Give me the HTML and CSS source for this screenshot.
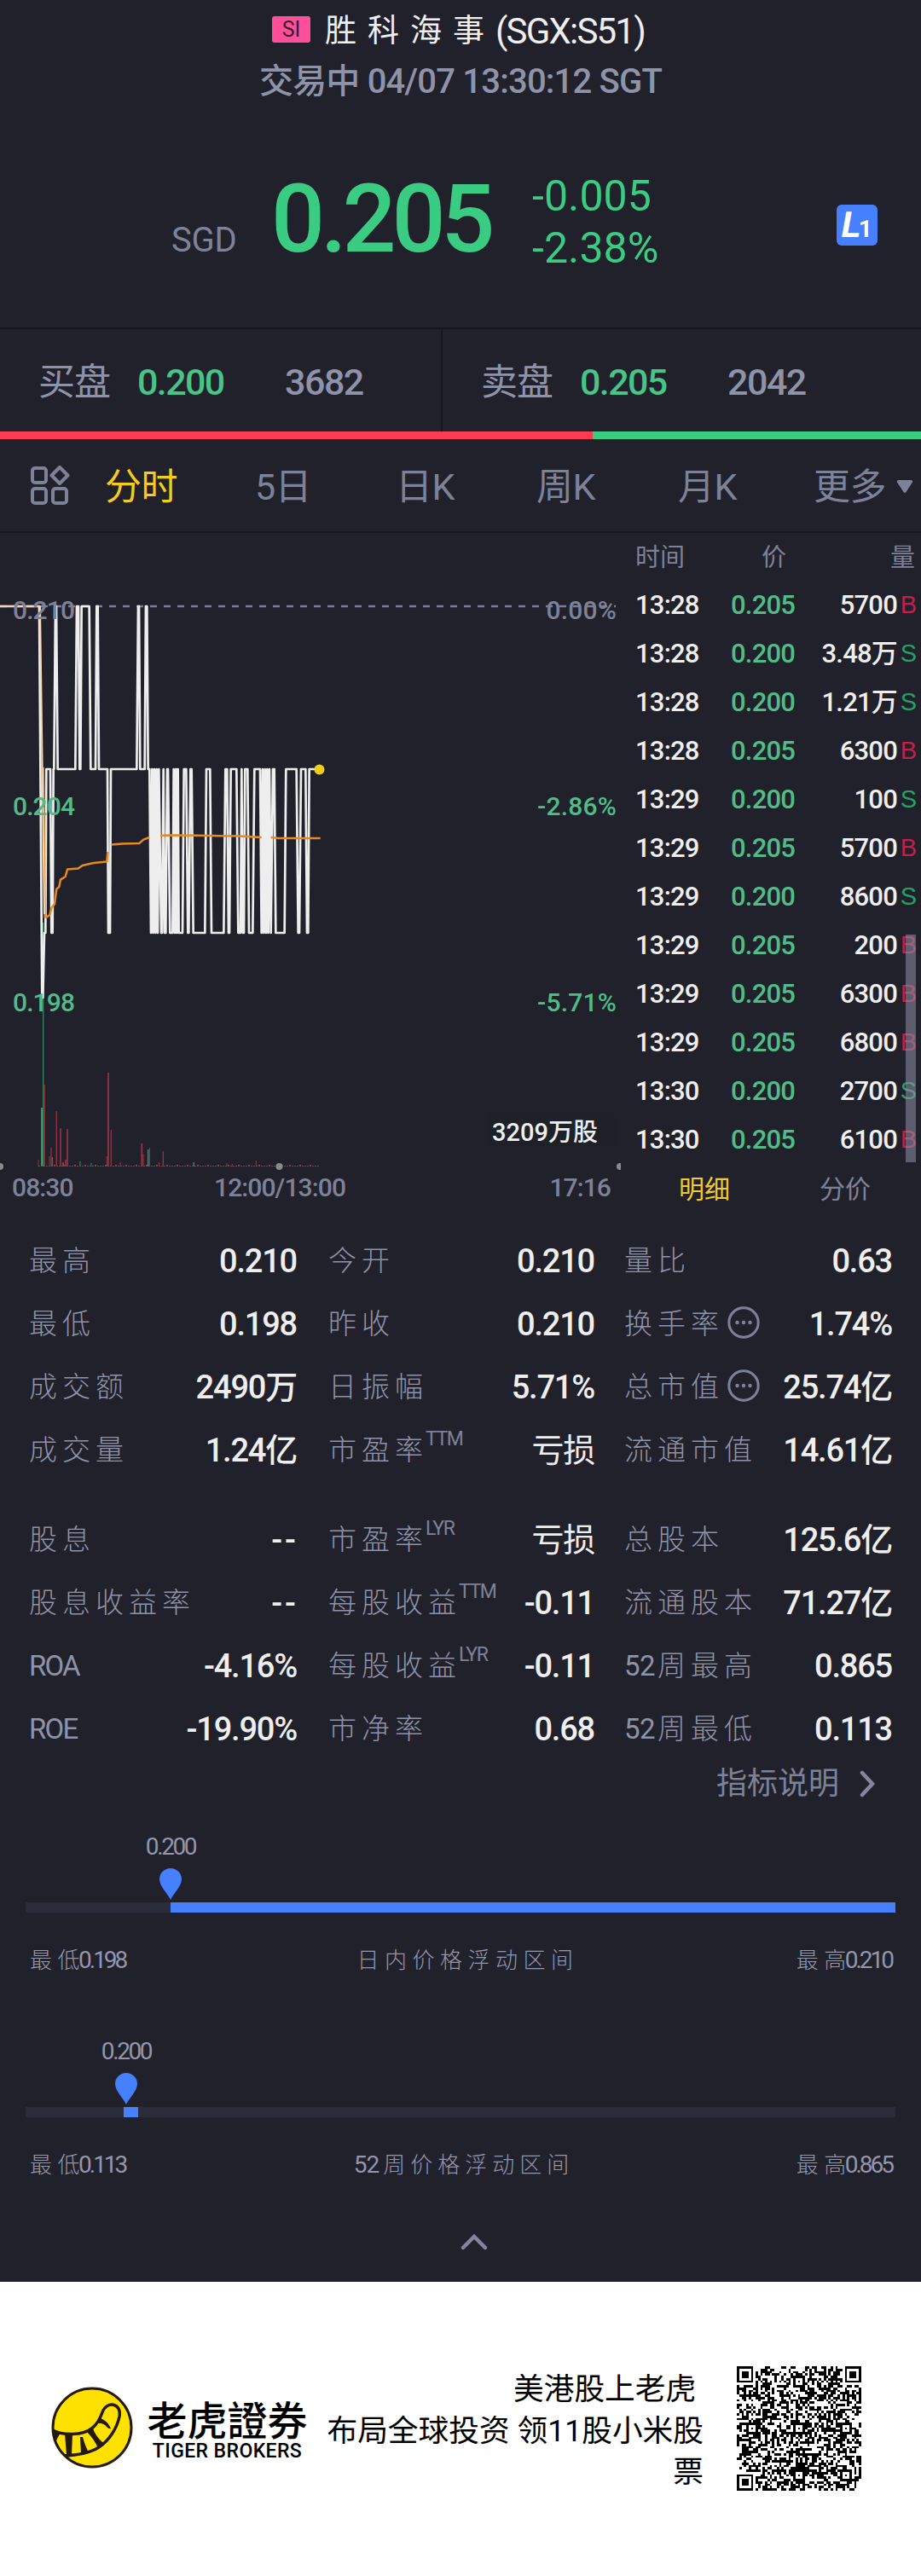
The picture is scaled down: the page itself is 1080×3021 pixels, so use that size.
FILE: index.html
```html
<!DOCTYPE html>
<html lang="zh-CN">
<head>
<meta charset="utf-8">
<title>胜科海事 (SGX:S51)</title>
<link rel="stylesheet" href="styles.css">
</head>
<body>
<main class="app">
  <header class="head">
    <div class="title"><span class="market">SI</span><span class="name">胜科海事</span><span class="code">(SGX:S51)</span></div>
    <div class="status">交易中 04/07 13:30:12 SGT</div>
  </header>

  <section class="quote">
    <span class="currency">SGD</span>
    <span class="price">0.205</span>
    <div class="change"><span>-0.005</span><span>-2.38%</span></div>
    <span class="level"><b>L</b><i>1</i></span>
  </section>

  <section class="book">
    <div class="side"><span class="side-name">买盘</span><span class="side-price">0.200</span><span class="side-qty">3682</span></div>
    <div class="side"><span class="side-name">卖盘</span><span class="side-price">0.205</span><span class="side-qty">2042</span></div>
  </section>
  <div class="ratio"><i class="ratio-buy" style="width:64.35%"></i></div>

  <nav class="tabs">
    <svg class="grid-icon" viewBox="0 0 48 48" width="48" height="48" fill="none" stroke="#7e8299" stroke-width="4">
      <rect x="3" y="3" width="16" height="17" rx="3"/><rect x="3" y="27" width="16" height="17" rx="3"/><rect x="27" y="27" width="16" height="17" rx="3"/><path d="M35 2 L44.500 11.500 L35 21 L25.500 11.500 Z" stroke-linejoin="round"/>
    </svg>
    <span class="tab tab-on">分时</span><span class="tab">5日</span><span class="tab">日K</span><span class="tab">周K</span><span class="tab">月K</span><span class="tab tab-more">更多</span>
    <svg class="caret" viewBox="0 0 20 17" width="20" height="17"><path d="M2 1H18Q20 2 19 3.500L11.500 15Q10 17 8.500 15L1 3.500Q0 2 2 1Z" fill="#7e8299"/></svg>
  </nav>

  <section class="market-view">
    <svg class="chart" viewBox="0 625 728 800" width="728" height="800">
      <path d="M0 711H722" stroke="#7a7d95" stroke-width="2.500" stroke-dasharray="8 8"/>
      <g id="volume"></g>
      <g fill="none" transform="scale(.33333 1)" stroke-linejoin="round">
        <path vector-effect="non-scaling-stroke" stroke="#eeeeee" stroke-width="2.700" d="M0 711H138L148 1170H151L156 1094H160L163 902H177L181 1094H185L188 902H190L195 711H198L203 902H265L270 711H276L280 902H283L287 711H314L319 902H336L340 711H344L348 902H378L381 1094H387L390 902H481L486 711H489L493 902H509L513 711H517L521 902H526L531 1094L535 902L539 1094L543 902L547 1094L551 902L555 1094L559 902L567 1094H570L575 902L579 1094H583L588 902H591L598 1094H607L611 902L615 1094L619 902L622 1094L626 902L629 1094H642L647 902H655L661 1094H664L670 902H674L680 1094H721L726 902H739L744 1094H787L793 902H799L804 1094H807L812 902H832L838 1094H846L850 902L854 1094H858L862 902H871L876 1094H889L895 902H915L920 1094L924 902L928 1094L932 902L936 1094L940 902L944 1094L948 902L953 1094L960 902H965L970 1094H1001L1006 902H1043L1049 1094H1053L1059 902H1075L1080 1094H1084L1088 902H1123"/>
        <path vector-effect="non-scaling-stroke" stroke="#e58a24" stroke-width="2.500" d="M152 900L158 1075.600H164L175 1073L181 1065L192 1060L199 1042.600L208 1040L213 1031.600L230 1028L237 1019.600L275 1018.600L290 1015L330 1012L376 1010.600L379 999M392 990.600L430 989.600L490 989L505 984.600L526 982M564 980L600 979.600L740 980L840 980.600L920 982M953 982L980 983H1127"/>
        <path vector-effect="non-scaling-stroke" stroke="#f8d4ac" stroke-width="2" d="M0 711H141L156 1072"/>
      </g>
      <circle cx="374.500" cy="902.500" r="6" fill="#f5cf0e"/>
      <g fill="#8a8a8a"><circle cx="0" cy="1368" r="4"/><circle cx="327.500" cy="1368" r="4"/><circle cx="727" cy="1368" r="4"/></g>
      <g class="axis">
        <text x="15" y="726">0.210</text><text class="pct" x="723" y="726" text-anchor="end">0.00%</text>
        <g class="down"><text x="15" y="956">0.204</text><text class="pct" x="723" y="956" text-anchor="end">-2.86%</text>
        <text x="15" y="1185.500">0.198</text><text class="pct" x="723" y="1185.500" text-anchor="end">-5.71%</text></g>
        <text x="14" y="1403">08:30</text><text x="251" y="1403">12:00/13:00</text><text x="716" y="1403" text-anchor="end">17:16</text>
      </g>
      <rect x="571" y="1307" width="151" height="37" fill="#1f2128"/>
      <text class="vol-label" x="577" y="1338">3209万股</text>
    </svg>

    <aside class="ticks">
      <div class="tick tick-head"><span>时间</span><span>价</span><span>量</span></div>
      <div class="tick"><span>13:28</span><em>0.205</em><b>5700</b><i class="b">B</i></div>
      <div class="tick"><span>13:28</span><em>0.200</em><b>3.48万</b><i class="s">S</i></div>
      <div class="tick"><span>13:28</span><em>0.200</em><b>1.21万</b><i class="s">S</i></div>
      <div class="tick"><span>13:28</span><em>0.205</em><b>6300</b><i class="b">B</i></div>
      <div class="tick"><span>13:29</span><em>0.200</em><b>100</b><i class="s">S</i></div>
      <div class="tick"><span>13:29</span><em>0.205</em><b>5700</b><i class="b">B</i></div>
      <div class="tick"><span>13:29</span><em>0.200</em><b>8600</b><i class="s">S</i></div>
      <div class="tick"><span>13:29</span><em>0.205</em><b>200</b><i class="b">B</i></div>
      <div class="tick"><span>13:29</span><em>0.205</em><b>6300</b><i class="b">B</i></div>
      <div class="tick"><span>13:29</span><em>0.205</em><b>6800</b><i class="b">B</i></div>
      <div class="tick"><span>13:30</span><em>0.200</em><b>2700</b><i class="s">S</i></div>
      <div class="tick"><span>13:30</span><em>0.205</em><b>6100</b><i class="b">B</i></div>
      <div class="tick-tabs"><span class="on">明细</span><span>分价</span></div>
      <div class="scrollbar"></div>
    </aside>
  </section>

  <section class="stats">
    <div class="cell"><span>最高</span><b>0.210</b></div><div class="cell"><span>今开</span><b>0.210</b></div><div class="cell"><span>量比</span><b>0.63</b></div>
    <div class="cell"><span>最低</span><b>0.198</b></div><div class="cell"><span>昨收</span><b>0.210</b></div><div class="cell"><span>换手率</span><svg class="more" viewBox="0 0 38 38"><circle cx="19" cy="19" r="17.200"/><path d="M11.500 19h.01M19 19h.01M26.500 19h.01"/></svg><b>1.74%</b></div>
    <div class="cell"><span>成交额</span><b>2490万</b></div><div class="cell"><span>日振幅</span><b>5.71%</b></div><div class="cell"><span>总市值</span><svg class="more" viewBox="0 0 38 38"><circle cx="19" cy="19" r="17.200"/><path d="M11.500 19h.01M19 19h.01M26.500 19h.01"/></svg><b>25.74亿</b></div>
    <div class="cell"><span>成交量</span><b>1.24亿</b></div><div class="cell"><span>市盈率</span><sup>TTM</sup><b class="text">亏损</b></div><div class="cell"><span>流通市值</span><b>14.61亿</b></div>
  </section>
  <section class="stats stats-second">
    <div class="cell"><span>股息</span><b class="dash">--</b></div><div class="cell"><span>市盈率</span><sup>LYR</sup><b class="text">亏损</b></div><div class="cell"><span>总股本</span><b>125.6亿</b></div>
    <div class="cell"><span>股息收益率</span><b class="dash">--</b></div><div class="cell"><span>每股收益</span><sup>TTM</sup><b>-0.11</b></div><div class="cell"><span>流通股本</span><b>71.27亿</b></div>
    <div class="cell"><span class="latin">ROA</span><b>-4.16%</b></div><div class="cell"><span>每股收益</span><sup>LYR</sup><b>-0.11</b></div><div class="cell"><span><span class="latin">52</span>周最高</span><b>0.865</b></div>
    <div class="cell"><span class="latin">ROE</span><b>-19.90%</b></div><div class="cell"><span>市净率</span><b>0.68</b></div><div class="cell"><span><span class="latin">52</span>周最低</span><b>0.113</b></div>
  </section>
  <div class="explain">指标说明<svg viewBox="0 0 20 32" width="20" height="32"><path d="M4 3L16 16L4 29"/></svg></div>

  <section class="range">
    <div class="marker" style="margin-left:170px"><span>0.200</span><svg viewBox="0 0 26 37" width="26" height="37"><path d="M13 37C10 30 0 21 0 13A13 13 0 0 1 26 13C26 21 16 30 13 37Z"/></svg></div>
    <div class="track"><i style="margin-left:170px;width:850px"></i></div>
    <div class="ends"><span>最低<em>0.198</em></span><span class="mid">日内价格浮动区间</span><span>最高<em>0.210</em></span></div>
  </section>
  <section class="range">
    <div class="marker" style="margin-left:118px"><span>0.200</span><svg viewBox="0 0 26 37" width="26" height="37"><path d="M13 37C10 30 0 21 0 13A13 13 0 0 1 26 13C26 21 16 30 13 37Z"/></svg></div>
    <div class="track"><i style="margin-left:115px;width:17px"></i></div>
    <div class="ends"><span>最低<em>0.113</em></span><span class="mid"><em>52</em>周价格浮动区间</span><span>最高<em>0.865</em></span></div>
  </section>
  <div class="collapse"><svg viewBox="0 0 32 20" width="32" height="20"><path d="M3 17L16 4L29 17"/></svg></div>
</main>

<footer class="brand">
  <svg class="logo" viewBox="0 0 96 96" width="96" height="96">
    <defs><clipPath id="disc"><circle cx="48" cy="48" r="46"/></clipPath></defs>
    <circle cx="48" cy="48" r="46" fill="#ffe100"/>
    <g clip-path="url(#disc)">
      <path d="M0 50Q10 56 25 55.500C47 55 55 44 60 30C65 16 83 19 80 35C77 49 68 63 56 71Q42 80 14 81" fill="none" stroke="#231a0c" stroke-width="3.500"/>
      <path d="M16 55H25L24 80H18ZM34 59L37 59Q40 70 44 77L35 79ZM42 53L49 49Q52 58 61 66L55 72Q50 61 42 53ZM53 43L58 37Q66 40 70 49Q68 50 65 47Q61 42 53 43ZM1 49L11 54Q7 60 5 66Z" fill="#231a0c"/>
    </g>
    <circle cx="48" cy="48" r="46" fill="none" stroke="#231a0c" stroke-width="3"/>
  </svg>
  <div class="brand-name"><strong>老虎證券</strong><span>TIGER BROKERS</span></div>
  <p class="slogan">美港股上老虎&nbsp;<br>布局全球投资 领11股小米股<br>票</p>
  <svg class="qr" id="qr" viewBox="0 0 53 53" width="146" height="146" shape-rendering="crispEdges"></svg>
</footer>
<script src="main.js"></script>
</body>
</html>
```
FILE: styles.css
```css
* { box-sizing: border-box; }
body {
  margin: 0;
  width: 1080px;
  background: #fff;
  font-family: Roboto, "Noto Sans CJK SC", sans-serif;
  color: #eee;
}
i, em { font-style: normal; }
.app { height: 2676px; background: #21212b; }

.head { height: 150px; padding-top: 11px; display: flex; flex-direction: column; align-items: center; }
.title { height: 52px; display: flex; align-items: center; line-height: 52px; font-size: 37px; }
.market { width: 45px; height: 31px; margin: -5px 17px 0 0; border-radius: 3px; background: #ff4f9a; color: #3a1a2c; font-size: 25px; line-height: 31px; text-align: center; }
.name { letter-spacing: 13px; }
.code { width: 180px; font-size: 42px; letter-spacing: -1.800px; }
.status { height: 66px; line-height: 66px; font-size: 40px; font-weight: 500; letter-spacing: -.8px; color: #8f93aa; }

.quote { height: 234px; display: flex; color: #3acc82; position: relative; }
.currency { margin: 107px 0 0 201px; width: 117px; font-size: 40px; line-height: 50px; letter-spacing: -.2px; color: #7e8299; }
.price { width: 306px; margin-top: 47px; font-size: 111px; font-weight: 500; line-height: 120px; letter-spacing: -5.2px; }
.change { display: flex; flex-direction: column; margin-top: 50px; font-size: 50px; line-height: 61px; letter-spacing: .1px; }
.level { width: 48px; height: 48px; margin: 90px 51px 0 auto; border-radius: 6px; background: #4680ff; color: #fff; display: flex; justify-content: center; align-items: baseline; line-height: 48px; }
.level b { font-size: 42px; transform: skewX(-10deg); }
.level i { font-size: 28px; font-weight: 700; margin-left: -3px; }

.book { height: 122px; display: flex; border-top: 2px solid #16161f; font-size: 43px; }
.side { width: 517px; padding-left: 45px; display: flex; line-height: 124px; }
.side + .side { border-left: 2px solid #16161f; width: 563px; }
.side-name { width: 116px; letter-spacing: -1px; color: #8f93aa; }
.side-price { width: 173px; font-weight: 500; letter-spacing: -1.600px; color: #47c486; }
.side-qty { letter-spacing: -1.500px; font-weight: 500; color: #8f93aa; }
.ratio { height: 9px; background: #3acc82; }
.ratio-buy { display: block; height: 9px; background: #ff3b50; }

.tabs { height: 110px; border-bottom: 2px solid #16161f; display: grid; grid-template-columns: 123px 176px 165px 165px 166px 159px 97px 29px; align-items: center; color: #7e8299; font-size: 43px; line-height: 108px; letter-spacing: -.6px; }
.tab { padding-top: 2px; }
.grid-icon { margin-left: 35px; }
.tab-on { color: #f3cc1c; }

.market-view { height: 800px; display: flex; position: relative; }
.chart { display: block; font-family: Roboto, "Noto Sans CJK SC", sans-serif; }
.axis { font-size: 30px; letter-spacing: -.9px; fill: #7e8299; font-weight: 500; }
.axis .pct { letter-spacing: .2px; }
.axis .down { fill: #50bd88; }
.vol-label { font-size: 29px; fill: #eee; font-weight: 500; letter-spacing: 0; }
.ticks { width: 352px; position: relative; padding-left: 17px; }
.tick { height: 57px; display: grid; grid-template-columns: 112px 78px 117px 23px; align-items: center; font-size: 31px; font-weight: 500; letter-spacing: -.8px; line-height: 59px; }
.tick em { color: #50bd88; }
.tick b { font-weight: 500; text-align: right; white-space: nowrap; }
.tick i { font-family: "Liberation Sans", sans-serif; font-size: 29px; font-weight: 400; text-align: right; letter-spacing: 0; }
.b { color: #c2204a; }
.s { color: #25a063; }
.tick-head { height: 55px; padding-bottom: 3px; color: #7e8299; font-size: 29px; font-weight: 400; letter-spacing: 0; grid-template-columns: 148px 78px 102px; }
.tick-head span:last-child { text-align: right; }
.tick-tabs { display: flex; gap: 105px; padding-left: 51px; font-size: 30px; line-height: 62px; color: #7e8299; }
.tick-tabs .on { color: #f0cb2e; }
.scrollbar { position: absolute; right: 6px; top: 471px; width: 12px; height: 267px; background: rgba(142, 143, 168, .55); }

.stats { display: grid; grid-template-columns: 314px 312px 312px; column-gap: 37px; padding: 17px 0 0 34px; grid-auto-rows: 74px; }
.stats-second { padding-top: 31px; }
.cell { display: flex; align-items: center; line-height: 74px; font-size: 33px; color: #8f93aa; white-space: nowrap; }
.cell:nth-child(3n) { padding-left: 0; margin-left: -2px; }
.cell span { letter-spacing: 6px; font-weight: 300; }
.cell .latin { letter-spacing: -1.800px; font-size: 33px; font-weight: 400; }
.cell span .latin { letter-spacing: -.5px; margin-right: 3px; }
.cell b { margin-left: auto; font-size: 38px; font-weight: 500; letter-spacing: -1.200px; color: #eee; }
.cell .text { font-weight: 400; }
.cell .dash { letter-spacing: 3px; margin-right: -2px; }
.cell sup { font-size: 23px; line-height: 24px; margin: -26px 0 0 -3px; letter-spacing: -1.400px; color: #7e8299; }
.more { width: 38px; height: 38px; margin-left: 4px; fill: none; stroke: #7e8299; stroke-width: 3; margin-top: -5px; }
.more path { stroke-width: 4.500; stroke-linecap: round; }
.explain { height: 53px; padding: 1px 53px 0 0; display: flex; align-items: center; justify-content: flex-end; gap: 23px; font-size: 36px; line-height: 53px; color: #7e8299; }
.explain svg, .collapse svg { fill: none; stroke: #8285a0; stroke-width: 4.500; stroke-linecap: round; }

.range { height: 240px; padding: 31px 30px 0; color: #9496ab; }
.marker { width: 60px; transform: translateX(-30px); display: flex; flex-direction: column; align-items: center; font-size: 28px; line-height: 34px; letter-spacing: -2.400px; }
.marker svg { margin: 8px 0 3px; fill: #4680ff; }
.track { height: 12px; background: #2b2c39; display: flex; }
.track i { height: 12px; background: #4680ff; }
.ends { display: grid; grid-template-columns: 1fr auto 1fr; padding: 36px 4px 0 5px; font-size: 26px; font-weight: 300; line-height: 40px; letter-spacing: 6.500px; }
.ends span:last-child { text-align: right; }
.ends em { font-size: 28px; font-weight: 400; letter-spacing: -3px; margin-left: -8px; }
.ends .mid { padding-left: 16px; }
.ends .mid em { margin: 0 5px 0 0; letter-spacing: -1px; }
.range + .range .mid { padding-left: 7px; letter-spacing: 6px; }
.collapse { height: 60px; padding: 0 0 0 540px; }
.collapse svg { display: block; transform: translateY(21px); }

.brand { height: 345px; display: flex; align-items: flex-start; color: #000; }
.logo { margin: 123px 0 0 60px; }
.brand-name { width: 187px; margin: 130px 0 0 17px; display: flex; flex-direction: column; align-items: center; }
.brand-name strong { font-family: "Noto Sans CJK TC", sans-serif; font-size: 47px; line-height: 60px; font-weight: 500; white-space: nowrap; }
.brand-name span { font-size: 23px; line-height: 20px; margin-top: -1px; font-weight: 500; letter-spacing: .4px; white-space: nowrap; }
.slogan { width: 465px; margin: 102px 0 0; font-size: 35.700px; line-height: 48.500px; text-align: right; white-space: nowrap; }
.qr { margin: 99px 0 0 39px; }
```
FILE: main.js
```js
const NS = 'http://www.w3.org/2000/svg';

// Volume bars: x, height, width, colour (r = up, g = down)
const bars = [
  [45, 8, 1, 'r'], [49, 69, 2, 'g'], [50.7, 286, 1.2, 'g'], [52.3, 96, 1.3, 'r'],
  [58, 12, 1, 'r'], [60, 22, 1.3, 'r'], [61.3, 11, 1, 'g'], [66.3, 65, 1.3, 'r'],
  [71, 45, 1.6, 'r'], [74, 5, 2, 'r'], [77, 8, 1.5, 'r'], [79, 44, 1.6, 'r'],
  [94, 6, 1, 'g'], [107, 4, 1, 'g'], [125.3, 12, 1, 'r'], [127, 110, 1.7, 'r'],
  [130.3, 43, 1.2, 'r'], [141, 5, 1, 'r'], [166.3, 27, 1.7, 'r'], [168, 15, 1, 'r'],
  [173.700, 20, 1.5, 'g'], [175.500, 22, 1, 'r'], [186.500, 5, 1, 'r'], [191.3, 18, 1.3, 'r'],
  [227.3, 5, 1.4, 'g'], [266, 4, 1, 'r'], [272.3, 3, 1, 'r'], [300.3, 7, 1, 'r']
];
for (let x = 46; x < 375; x += 3) bars.push([x, x % 4 ? 1 : 2, 2, 'r']);
const volume = document.getElementById('volume');
for (const [x, h, w, c] of bars) {
  const r = document.createElementNS(NS, 'rect');
  r.setAttribute('x', x - w / 2);
  r.setAttribute('y', 1368 - h);
  r.setAttribute('width', w);
  r.setAttribute('height', h);
  r.setAttribute('fill', c === 'r' ? '#9b3445' : '#3b8f65');
  volume.appendChild(r);
}

// QR code: finder, alignment and timing patterns around a data field
const N = 53;
let seed = 20210407;
const rnd = () => (seed = (seed * 1103515245 + 12345) % 2147483648) / 2147483648;
const ring = (x, y, cx, cy) => Math.max(Math.abs(x - cx), Math.abs(y - cy));
let d = '';
for (let y = 0; y < N; y++) {
  for (let x = 0; x < N; x++) {
    let on = rnd() < 0.5;
    if (x === 6 || y === 6) on = (x + y) % 2 === 0;
    for (const [cx, cy] of [[26, 6], [6, 26], [26, 26], [46, 26], [26, 46], [46, 46]]) {
      const k = ring(x, y, cx, cy);
      if (k < 3) on = k !== 1;
    }
    for (const [cx, cy] of [[3, 3], [N - 4, 3], [3, N - 4]]) {
      const k = ring(x, y, cx, cy);
      if (k < 5) on = k !== 2 && k !== 4;
    }
    if (on) d += `M${x} ${y}h1v1h-1z`;
  }
}
const p = document.createElementNS(NS, 'path');
p.setAttribute('d', d);
document.getElementById('qr').appendChild(p);
```
